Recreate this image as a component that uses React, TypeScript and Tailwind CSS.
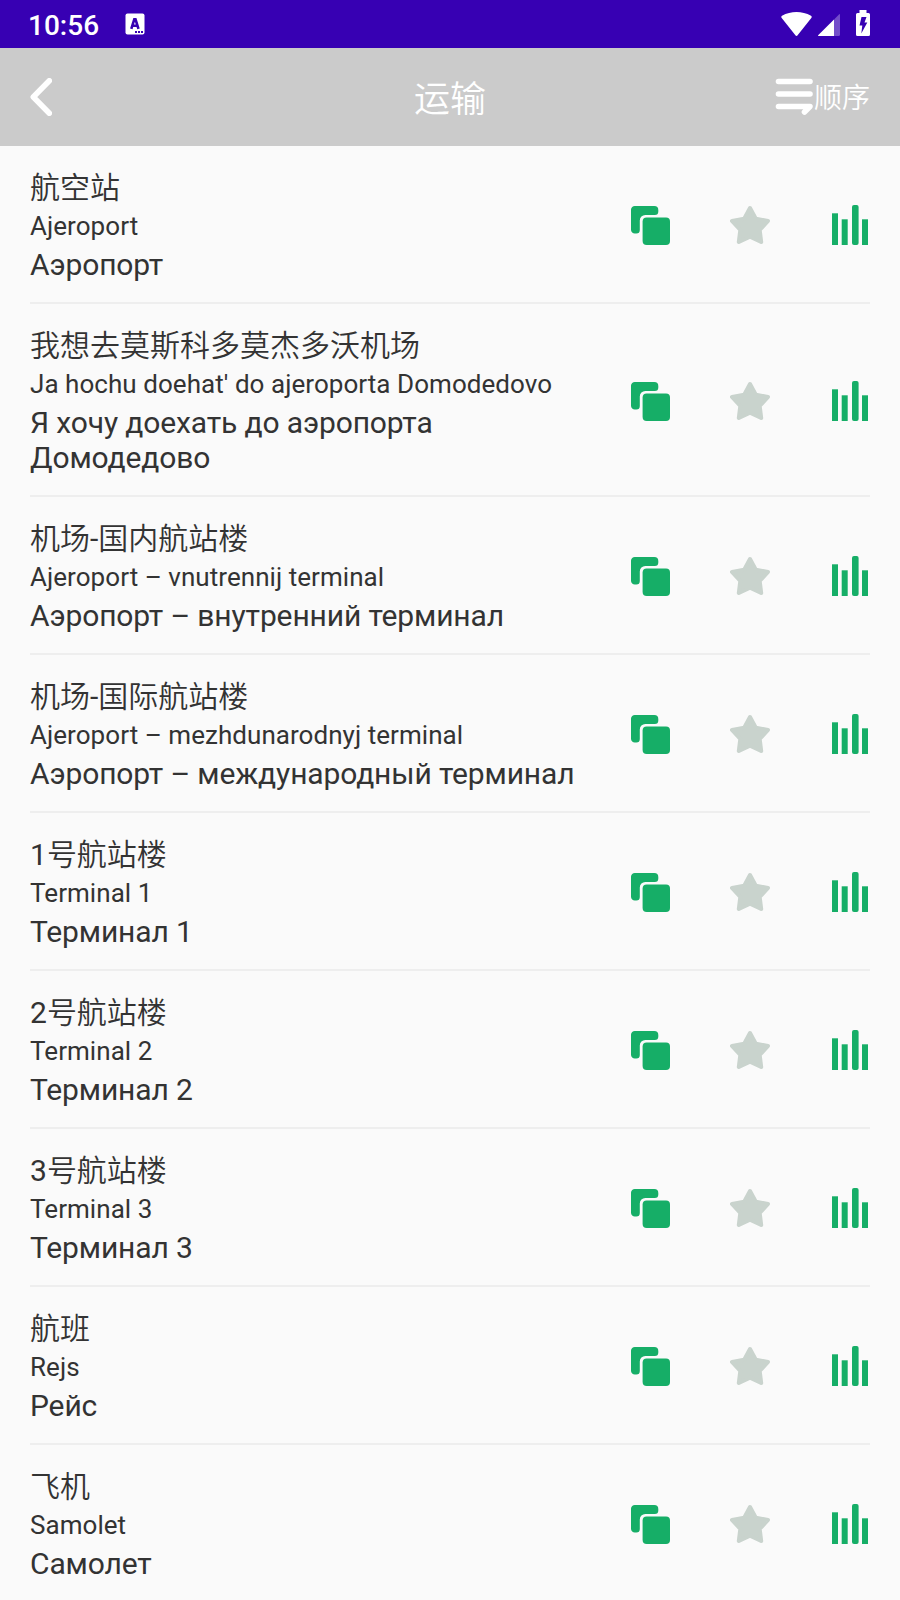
interface Phrase {
  zh: string
  latin: string
  ru: string
}

const phrases: Phrase[] = [
  { zh: '航空站', latin: 'Ajeroport', ru: 'Аэропорт' },
  {
    zh: '我想去莫斯科多莫杰多沃机场',
    latin: "Ja hochu doehat' do ajeroporta Domodedovo",
    ru: 'Я хочу доехать до аэропорта Домодедово',
  },
  { zh: '机场-国内航站楼', latin: 'Ajeroport – vnutrennij terminal', ru: 'Аэропорт – внутренний терминал' },
  { zh: '机场-国际航站楼', latin: 'Ajeroport – mezhdunarodnyj terminal', ru: 'Аэропорт – международный терминал' },
  { zh: '1号航站楼', latin: 'Terminal 1', ru: 'Терминал 1' },
  { zh: '2号航站楼', latin: 'Terminal 2', ru: 'Терминал 2' },
  { zh: '3号航站楼', latin: 'Terminal 3', ru: 'Терминал 3' },
  { zh: '航班', latin: 'Rejs', ru: 'Рейс' },
  { zh: '飞机', latin: 'Samolet', ru: 'Самолет' },
]

function CopyIcon() {
  return (
    <svg width="40" height="40" viewBox="0 0 40 40" fill="#16ae67">
      <path d="M5 1H24.300a4 4 0 0 1 4 4v1.500a3.500 3.500 0 0 1-3.500 3.500H15.300a5.500 5.500 0 0 0-5.500 5.500V25a3.500 3.500 0 0 1-3.500 3.500H5A3.800 3.800 0 0 1 1 24.700V4.800A3.800 3.800 0 0 1 5 1z" />
      <rect x="12.600" y="12.500" width="27.400" height="27.500" rx="4" />
    </svg>
  )
}

function StarIcon() {
  return (
    <svg width="40" height="40" viewBox="0 0 40 40">
      <path
        d="M20 3 L25.800 13.800 L38 15.900 L29.700 25 L31.200 37 L20 31.700 L8.800 37 L10.300 25 L2 15.900 L14.200 13.800 Z"
        fill="#c9d3cd"
        stroke="#c9d3cd"
        strokeWidth="4"
        strokeLinejoin="round"
      />
    </svg>
  )
}

function BarsIcon() {
  return (
    <svg width="36" height="40" viewBox="0 0 36 40" fill="#16ae67">
      <rect x="0" y="8.300" width="6" height="31.700" />
      <rect x="9.700" y="14.300" width="6" height="25.700" />
      <rect x="20" y="0" width="6.600" height="40" rx="2" />
      <rect x="30" y="14.300" width="6" height="25.700" />
    </svg>
  )
}

function StatusBar() {
  return (
    <div className="flex h-12 items-center bg-[#3700b3] pl-7 pr-[30px] text-white">
      <span className="w-[72px] pt-[3px] text-[28px] font-medium leading-8">10:56</span>
      <svg className="ml-[25px]" width="20" height="22" viewBox="0 0 20 22">
        <rect x="0.500" y="0.500" width="19" height="21" rx="2" fill="#fff" />
        <path d="M6.300 15.800 L9.300 6.300 H10.500 L13.500 15.800 M7.500 12.800 H12.300" fill="none" stroke="#3700b3" strokeWidth="2.600" />
        <path d="M10 18h2v2h-2zM13 18h2v2h-2zM16 18h2v2h-2z" fill="#3700b3" />
      </svg>
      <div className="ml-auto flex items-center">
        <svg width="31" height="26" viewBox="0 0 31 26" fill="#fff">
          <path d="M16.800 24 Q15.500 25.800 14.200 24 L0.500 6.800 C0 5.500 0.500 5 1 4.700 C10 -0.300 21 -0.300 30 4.700 C30.500 5 31 5.500 30.500 6.800 Z" />
        </svg>
        <svg className="mb-0.5 ml-1.5" width="22" height="26" viewBox="0 0 22 26" fill="#fff">
          <path d="M22 5v19.500q0 1.500-1.500 1.500H16V9.500l5-5q1-1 1 .5z" fillOpacity="0.3" />
          <path d="M16 9.500V26H.7Q-.5 26 .4 25z" />
        </svg>
        <svg className="mb-0.5 ml-4" width="14" height="26" viewBox="0 0 14 26" fill="#fff">
          <path d="M3.500 0H10.500V3H12.500Q14 3 14 4.500V24.500Q14 26 12.500 26H1.500Q0 26 0 24.500V4.500Q0 3 1.500 3H3.500Z" />
          <path d="M5.500 7H10.500L8.500 12.500H11.300L5.300 23.500L6.300 15.500H3.500Z" fill="#3700b3" />
        </svg>
      </div>
    </div>
  )
}

function Header() {
  return (
    <header className="grid h-[98px] grid-cols-3 items-center bg-[#cbcbcb] px-[30px] text-white">
      <svg width="22" height="38" viewBox="0 0 22 38">
        <path d="M19.300 2.800 L3.300 19 L19.300 35.200" fill="none" stroke="#fff" strokeWidth="5.600" strokeLinecap="round" strokeLinejoin="round" />
      </svg>
      <h1 className="pt-1.5 text-center text-[36px] font-[350] leading-[52px]">运输</h1>
      <div className="flex items-center justify-end">
        <svg className="mr-px" width="38" height="38" viewBox="0 0 38 38" fill="none" stroke="#fff" strokeWidth="5.600" strokeLinecap="round" strokeLinejoin="round">
          <path d="M3.500 3.500H35M3.500 16H35M3.500 28.500H35L29.500 34" />
        </svg>
        <span className="pt-1 text-[28px] font-[350] leading-[42px]">顺序</span>
      </div>
    </header>
  )
}

// Chinese glyphs are set lighter than the digits and hyphens between them
function ChineseText({ text }: { text: string }) {
  return (
    <p className="text-[30px] font-[350] leading-10">
      {text.split(/([\d-]+)/).map((part, i) =>
        i % 2 === 1 ? (
          <span key={i} className="font-normal">
            {part}
          </span>
        ) : (
          part
        )
      )}
    </p>
  )
}

function PhraseRow({ phrase }: { phrase: Phrase }) {
  return (
    <li className="mx-[30px] flex items-center border-b-2 border-[#eeeeee] pb-5 pt-[22px]">
      <div className="w-[560px] shrink-0">
        <ChineseText text={phrase.zh} />
        <p className="text-[26px] leading-9 tracking-[0.05px]">{phrase.latin}</p>
        <p className="mt-[3px] text-[30px] leading-[35px] tracking-[-0.13px]">{phrase.ru}</p>
      </div>
      <div className="ml-auto flex items-center">
        <CopyIcon />
        <span className="ml-[60px]">
          <StarIcon />
        </span>
        <span className="ml-[62px] mr-0.5">
          <BarsIcon />
        </span>
      </div>
    </li>
  )
}

export default function App() {
  return (
    <div className="h-[1600px] w-[900px] overflow-hidden bg-[#fafafa] font-[Roboto,'Noto_Sans_CJK_SC',sans-serif] text-[#333333]">
      <StatusBar />
      <Header />
      <ul>
        {phrases.map((phrase) => (
          <PhraseRow key={phrase.latin} phrase={phrase} />
        ))}
      </ul>
    </div>
  )
}
